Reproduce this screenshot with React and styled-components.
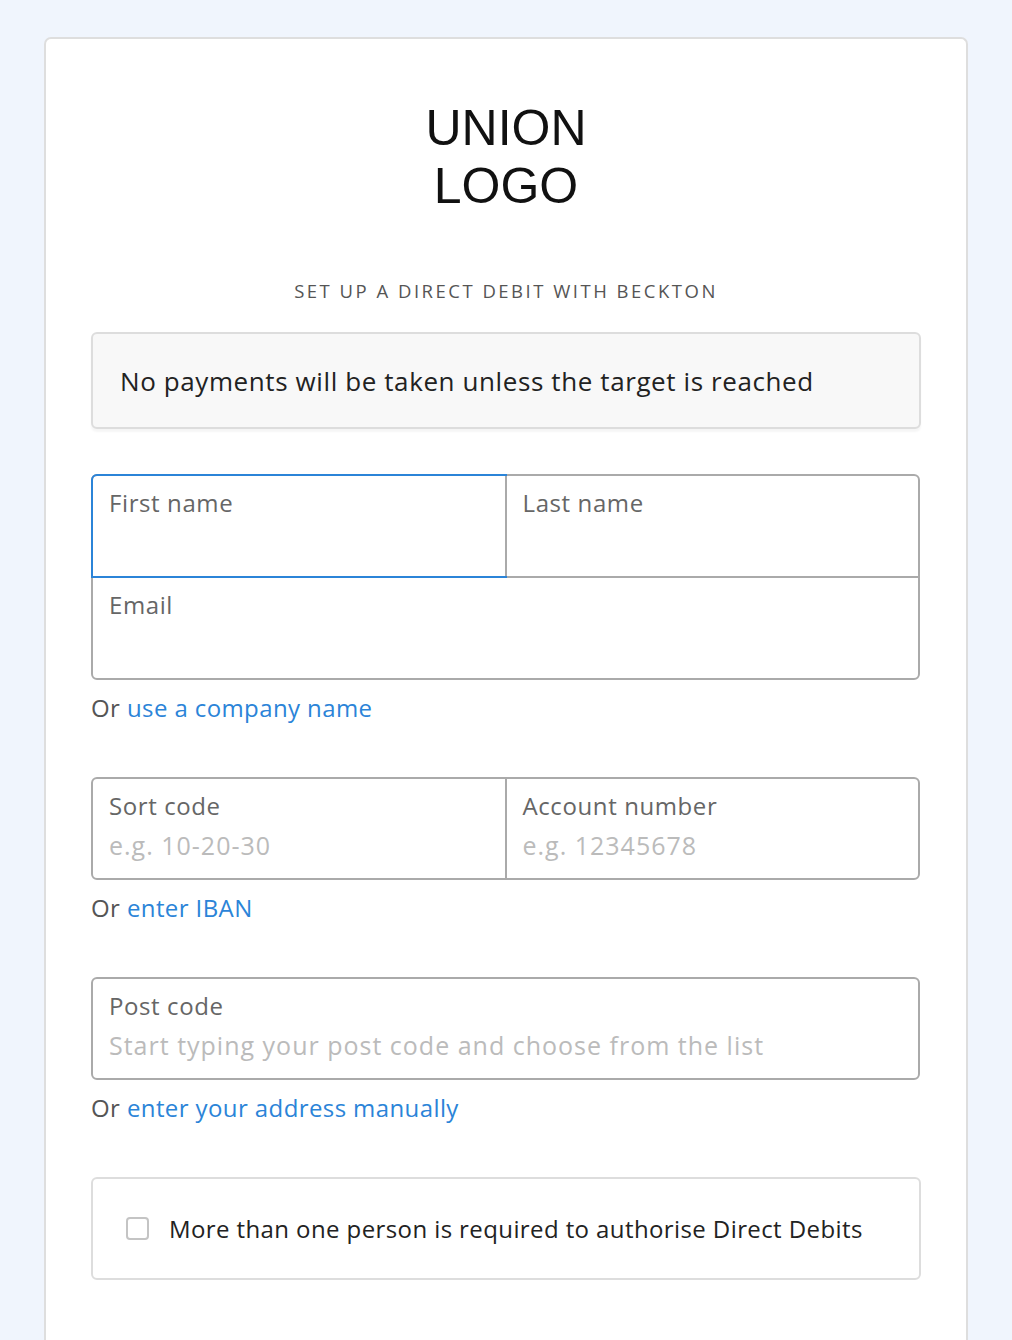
import React from "react";
import styled, { createGlobalStyle } from "styled-components";

const GlobalStyle = createGlobalStyle`
    * {
        box-sizing: border-box;
    }
    body {
        margin: 0;
        background: #f0f5fd;
        font-family: "Open Sans", "Liberation Sans", sans-serif;
    }
`;

function App() {
    return (
        <>
            <GlobalStyle />
            <Page>
                <Card>
                    <Logo>
                        UNION
                        <br />
                        LOGO
                    </Logo>
                    <Subtitle>Set up a direct debit with Beckton</Subtitle>
                    <Notice>
                        No payments will be taken unless the target is reached
                    </Notice>

                    <FieldGroup first>
                        <FieldRow>
                            <Field focused tall>
                                <Label>First name</Label>
                            </Field>
                            <Field tall>
                                <Label>Last name</Label>
                            </Field>
                        </FieldRow>
                        <FieldRow>
                            <Field tall>
                                <Label>Email</Label>
                            </Field>
                        </FieldRow>
                    </FieldGroup>
                    <AltLine>
                        Or <Link href="#">use a company name</Link>
                    </AltLine>

                    <FieldGroup>
                        <FieldRow>
                            <Field>
                                <Label>Sort code</Label>
                                <Placeholder>e.g. 10-20-30</Placeholder>
                            </Field>
                            <Field>
                                <Label>Account number</Label>
                                <Placeholder>e.g. 12345678</Placeholder>
                            </Field>
                        </FieldRow>
                    </FieldGroup>
                    <AltLine>
                        Or <Link href="#">enter IBAN</Link>
                    </AltLine>

                    <FieldGroup>
                        <FieldRow>
                            <Field>
                                <Label>Post code</Label>
                                <Placeholder>
                                    Start typing your post code and choose from the list
                                </Placeholder>
                            </Field>
                        </FieldRow>
                    </FieldGroup>
                    <AltLine>
                        Or <Link href="#">enter your address manually</Link>
                    </AltLine>

                    <CheckBox>
                        <Tick />
                        <CheckText>
                            More than one person is required to authorise Direct Debits
                        </CheckText>
                    </CheckBox>
                </Card>
            </Page>
        </>
    );
}

export default App;

const Page = styled.div`
    padding: 37px 44px 0 44px;
    height: 1340px;
    overflow: hidden;
`;

const Card = styled.div`
    background: #fff;
    border: 2px solid #dedede;
    border-bottom: none;
    border-radius: 7px 7px 0 0;
    padding: 60px 45px 80px 45px;
    min-height: 1400px;
`;

const Logo = styled.h1`
    margin: 0;
    text-align: center;
    font-family: "Liberation Sans", Arial, sans-serif;
    font-weight: 400;
    font-size: 50px;
    line-height: 58px;
    color: #111;
`;

const Subtitle = styled.h2`
    margin: 64px 0 0;
    text-align: center;
    text-transform: uppercase;
    font-size: 18.5px;
    font-weight: 400;
    letter-spacing: 2.5px;
    line-height: 24px;
    color: #555;
`;

const Notice = styled.div`
    margin-top: 29px;
    height: 97px;
    display: flex;
    align-items: center;
    padding: 0 27px;
    background: #f8f8f8;
    border: 2px solid #dddddd;
    border-radius: 6px;
    box-shadow: 0 3px 2px rgba(0, 0, 0, 0.04);
    font-size: 26px;
    color: #222;
    letter-spacing: 0.6px;
`;

const FieldGroup = styled.div`
    margin-top: ${(p) => (p.first ? "45px" : "55px")};
    margin-right: 1px;
    border: 2px solid #aaaaaa;
    border-radius: 6px;
`;

const FieldRow = styled.div`
    display: flex;
    & + & {
        border-top: 2px solid #aaaaaa;
    }
`;

const Field = styled.div`
    flex: 1;
    height: ${(p) => (p.tall ? "100px" : "99px")};
    padding: 13px 16px 0;
    position: relative;
    & + & {
        border-left: 2px solid #aaaaaa;
    }
    ${(p) =>
        p.focused &&
        `
        &::after {
            content: "";
            position: absolute;
            top: -2px;
            left: -2px;
            right: -2px;
            bottom: -2px;
            border: 2px solid #2b84d8;
            border-radius: 6px 0 0 0;
        }
    `}
`;

const Label = styled.div`
    font-size: 24px;
    line-height: 28px;
    color: #666;
    letter-spacing: 0.6px;
`;

const Placeholder = styled.div`
    margin-top: 11px;
    font-size: 25px;
    line-height: 28px;
    color: #bbbbbb;
    letter-spacing: 1px;
`;

const AltLine = styled.p`
    margin: 14px 0 0;
    font-size: 24px;
    line-height: 28px;
    color: #555;
    letter-spacing: 0.4px;
`;

const Link = styled.a`
    color: #2b84d8;
    text-decoration: none;
`;

const CheckBox = styled.label`
    margin-top: 55px;
    height: 103px;
    display: flex;
    align-items: center;
    gap: 20px;
    padding: 0 33px;
    border: 2px solid #dddddd;
    border-radius: 6px;
`;

const Tick = styled.span`
    width: 23px;
    height: 23px;
    border: 2px solid #c4c4c4;
    border-radius: 4px;
    background: #fff;
    flex-shrink: 0;
`;

const CheckText = styled.span`
    font-size: 24px;
    color: #222;
    letter-spacing: 0.4px;
`;
